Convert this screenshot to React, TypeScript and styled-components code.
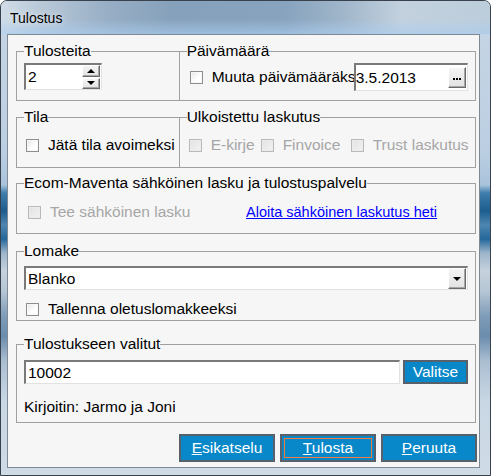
import React from 'react';
import styled, { createGlobalStyle, css } from 'styled-components';

const GlobalStyle = createGlobalStyle`
  html, body {
    margin: 0;
    padding: 0;
    background: #ffffff;
  }
  body {
    font-family: 'Liberation Sans', Arial, sans-serif;
  }
`;

const Window = styled.div`
  width: 491px;
  height: 476px;
  box-sizing: border-box;
  display: flex;
  flex-direction: column;
  border: 1px solid #39424c;
  border-radius: 7px 7px 0 0;
  overflow: hidden;
  font-family: 'Liberation Sans', Arial, sans-serif;
  font-size: 15.5px;
  color: #000;
  background: linear-gradient(
    to bottom,
    #c6d5e4 0px,
    #bccfe2 150px,
    #a9c3dc 184px,
    #3e7dac 192px,
    #1c5d8d 210px,
    #4f86b2 224px,
    #24679a 238px,
    #9db5cb 252px,
    #c6d2dd 270px,
    #b6c6d5 290px,
    #7f9cb8 315px,
    #6b8cad 335px,
    #aabed1 360px,
    #c9d7e4 400px,
    #cfdbe6 476px
  );
`;

const TitleBar = styled.div`
  height: 33px;
  flex: none;
  display: flex;
  align-items: center;
  padding: 1px 0 0 9px;
  box-sizing: border-box;
  background:
    linear-gradient(to bottom, rgba(255, 255, 255, 0) 55%, rgba(170, 205, 240, 0.65) 100%),
    linear-gradient(
      to right,
      #d0dce7 0%,
      #b9c9d8 8%,
      #97aec5 22%,
      #86a1bb 35%,
      #87a3be 58%,
      #a0b6ca 70%,
      #c3d1de 82%,
      #bccddb 100%
    );
`;

const Title = styled.span`
  font-size: 14px;
  color: #000;
  text-shadow: 0 0 6px rgba(255, 255, 255, 0.9);
`;

const Client = styled.div`
  flex: 1;
  margin: 0 10px 7px 6px;
  border: 1px solid #7d8a96;
  background: #f6f6f6;
  padding: 0 3px 0 8px;
  display: flex;
  flex-direction: column;
`;

const Row = styled.div<{ $mt: number }>`
  display: flex;
  margin-top: ${(p) => p.$mt}px;
`;

const Group = styled.fieldset<{ $w?: number; $h: number; $mt?: number; $join?: boolean }>`
  box-sizing: border-box;
  width: ${(p) => (p.$w ? `${p.$w}px` : 'auto')};
  height: ${(p) => p.$h}px;
  margin: ${(p) => p.$mt || 0}px 0 0 ${(p) => (p.$join ? -1 : 0)}px;
  padding: 0 7px;
  border: 1px solid #a0a0a0;
  min-width: 0;
`;

const Legend = styled.legend`
  padding: 0;
  margin: 0;
  line-height: 16px;
  font-size: 15.5px;
  color: #000;
`;

const Field = styled.div<{ $w: number; $h: number; $mt?: number }>`
  box-sizing: border-box;
  width: ${(p) => p.$w}px;
  height: ${(p) => p.$h}px;
  margin-top: ${(p) => p.$mt || 0}px;
  display: flex;
  align-items: center;
  background: #fff;
  border-style: solid;
  border-width: 2px 1px 1px 2px;
  border-color: #7a7a7a #e2e2e2 #e2e2e2 #7a7a7a;
`;

const FieldText = styled.span<{ $pad?: number }>`
  flex: 1;
  padding-left: ${(p) => p.$pad ?? 2}px;
  line-height: 16px;
  white-space: nowrap;
  overflow: hidden;
`;

const raised = css`
  box-sizing: border-box;
  background: linear-gradient(to bottom, #f4f4f4, #e2e2e2);
  border-style: solid;
  border-width: 1px;
  border-color: #ffffff #6a6a6a #6a6a6a #ffffff;
  box-shadow: inset -1px -1px 0 #a6a6a6;
  display: flex;
  align-items: center;
  justify-content: center;
`;

const SpinCol = styled.div`
  width: 18px;
  align-self: stretch;
  display: flex;
  flex-direction: column;
  gap: 1px;
  margin: 0 1px 0 0;
`;

const SpinBtn = styled.div`
  ${raised};
  flex: 1;
`;

const Arrow = styled.span<{ $dir: 'up' | 'down' }>`
  width: 0;
  height: 0;
  border-left: 4px solid transparent;
  border-right: 4px solid transparent;
  ${(p) =>
    p.$dir === 'up'
      ? css`border-bottom: 4px solid #000;`
      : css`border-top: 4px solid #000;`}
`;

const SideBtn = styled.div`
  ${raised};
  width: 18px;
  height: 21px;
  margin-right: 1px;
  gap: 1px;
`;

const Dot = styled.span`
  width: 2px;
  height: 2px;
  background: #000;
  margin-top: 3px;
`;

const LineRow = styled.div<{ $mt?: number }>`
  display: flex;
  align-items: center;
  margin-top: ${(p) => p.$mt || 0}px;
`;

const Clip = styled.div<{ $w: number }>`
  width: ${(p) => p.$w}px;
  overflow: hidden;
  white-space: nowrap;
  display: flex;
`;

const Check = styled.label<{ $w?: number; $ml?: number; $off?: boolean }>`
  display: flex;
  align-items: center;
  flex: none;
  height: 16px;
  gap: 9px;
  width: ${(p) => (p.$w ? `${p.$w}px` : 'auto')};
  margin-left: ${(p) => p.$ml || 0}px;
  white-space: nowrap;
  line-height: 16px;
  color: ${(p) => (p.$off ? '#a6a6a6' : '#000')};
`;

const Box = styled.span<{ $off?: boolean }>`
  flex: none;
  width: 13px;
  height: 13px;
  box-sizing: border-box;
  border: 1px solid ${(p) => (p.$off ? '#b9b9b9' : '#8e8e8e')};
  background: ${(p) =>
    p.$off
      ? 'linear-gradient(135deg, #e2e2e2, #f2f2f2)'
      : 'linear-gradient(135deg, #e6e6e6 0%, #ffffff 60%)'};
  box-shadow: inset 0 0 0 1px ${(p) => (p.$off ? '#ececec' : '#f8f8f8')};
`;

const Link = styled.a`
  color: #0000ff;
  text-decoration: underline;
  font-size: 14.5px;
  line-height: 16px;
  cursor: pointer;
  white-space: nowrap;
`;

const Note = styled.div<{ $mt: number }>`
  margin-top: ${(p) => p.$mt}px;
  line-height: 16px;
`;

const ButtonBar = styled.div`
  display: flex;
  justify-content: flex-end;
  gap: 5px;
  margin: 11px -1px 0 0;
`;

const BlueButton = styled.button<{ $w: number; $h: number; $focus?: boolean }>`
  box-sizing: border-box;
  width: ${(p) => p.$w}px;
  height: ${(p) => p.$h}px;
  flex: none;
  padding: 0;
  margin: 0;
  border: 2px solid #56616b;
  background: #0888c8;
  color: #fff;
  font-family: 'Liberation Sans', Arial, sans-serif;
  font-size: 15.5px;
  line-height: 16px;
  ${(p) =>
    p.$focus &&
    css`
      outline: 1px solid #f27a3c;
      outline-offset: -5px;
    `}
`;

const Key = styled.span`
  text-decoration: underline;
`;

export default function App() {
  return (
    <>
      <GlobalStyle />
      <Window>
        <TitleBar>
          <Title>Tulostus</Title>
        </TitleBar>
        <Client>
          <Row $mt={8}>
            <Group $w={164} $h={58}>
              <Legend>Tulosteita</Legend>
              <Field $w={78} $h={27} $mt={4}>
                <FieldText>2</FieldText>
                <SpinCol>
                  <SpinBtn>
                    <Arrow $dir="up" />
                  </SpinBtn>
                  <SpinBtn>
                    <Arrow $dir="down" />
                  </SpinBtn>
                </SpinCol>
              </Field>
            </Group>
            <Group $w={298} $h={58} $join>
              <Legend>Päivämäärä</Legend>
              <LineRow $mt={4}>
                <Clip $w={167}>
                  <Check $ml={3}>
                    <Box />
                    Muuta päivämääräksi
                  </Check>
                </Clip>
                <Field $w={114} $h={28}>
                  <FieldText $pad={0}>3.5.2013</FieldText>
                  <SideBtn>
                    <Dot />
                    <Dot />
                    <Dot />
                  </SideBtn>
                </Field>
              </LineRow>
            </Group>
          </Row>

          <Row $mt={8}>
            <Group $w={164} $h={59}>
              <Legend>Tila</Legend>
              <LineRow $mt={12}>
                <Check $ml={2}>
                  <Box />
                  Jätä tila avoimeksi
                </Check>
              </LineRow>
            </Group>
            <Group $w={298} $h={59} $join>
              <Legend>Ulkoistettu laskutus</Legend>
              <LineRow $mt={12}>
                <Check $ml={2} $w={72} $off>
                  <Box $off />
                  E-kirje
                </Check>
                <Check $w={90} $off>
                  <Box $off />
                  Finvoice
                </Check>
                <Check $off>
                  <Box $off />
                  Trust laskutus
                </Check>
              </LineRow>
            </Group>
          </Row>

          <Group $h={59} $mt={7}>
            <Legend>Ecom-Maventa sähköinen lasku ja tulostuspalvelu</Legend>
            <LineRow $mt={13}>
              <Check $ml={4} $w={218} $off>
                <Box $off />
                Tee sähköinen lasku
              </Check>
              <Link>Aloita sähköinen laskutus heti</Link>
            </LineRow>
          </Group>

          <Group $h={78} $mt={9}>
            <Legend>Lomake</Legend>
            <Field $w={444} $h={24} $mt={7}>
              <FieldText $pad={2}>Blanko</FieldText>
              <SideBtn>
                <Arrow $dir="down" />
              </SideBtn>
            </Field>
            <LineRow $mt={11}>
              <Check $ml={2}>
                <Box />
                Tallenna oletuslomakkeeksi
              </Check>
            </LineRow>
          </Group>

          <Group $h={87} $mt={15}>
            <Legend>Tulostukseen valitut</Legend>
            <LineRow $mt={8}>
              <Field $w={376} $h={24}>
                <FieldText $pad={2}>10002</FieldText>
              </Field>
              <BlueButton $w={65} $h={24} style={{ marginLeft: 3 }}>
                Valitse
              </BlueButton>
            </LineRow>
            <Note $mt={15}>Kirjoitin: Jarmo ja Joni</Note>
          </Group>

          <ButtonBar>
            <BlueButton $w={96} $h={28}>
              <Key>E</Key>sikatselu
            </BlueButton>
            <BlueButton $w={96} $h={28} $focus>
              <Key>T</Key>ulosta
            </BlueButton>
            <BlueButton $w={96} $h={28}>
              <Key>P</Key>eruuta
            </BlueButton>
          </ButtonBar>
        </Client>
      </Window>
    </>
  );
}
